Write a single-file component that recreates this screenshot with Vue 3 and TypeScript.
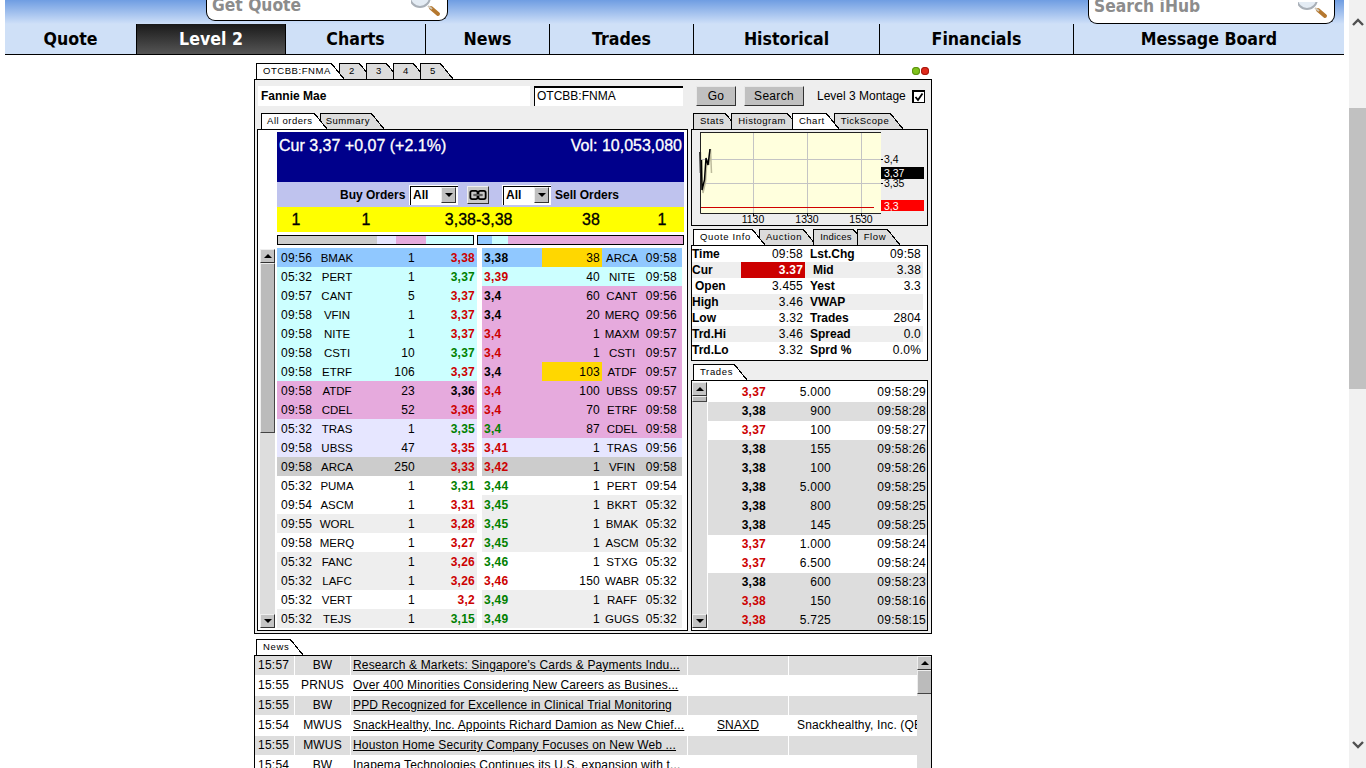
<script setup lang="ts">
type Tone = 'blue' | 'cyan' | 'pink' | 'lav' | 'gray' | 'white' | 'soft'
type Dir = 'up' | 'down' | 'flat'
interface Order { time: string; sym: string; size: string; price: string; dir: Dir; tone: Tone; gold?: boolean }

const navItems = ['Quote', 'Level 2', 'Charts', 'News', 'Trades', 'Historical', 'Financials', 'Message Board']
const navWidths = [132, 149, 140, 124, 144, 186, 194, 270]

const buys: Order[] = [
  { time: '09:56', sym: 'BMAK', size: '1', price: '3,38', dir: 'down', tone: 'blue' },
  { time: '05:32', sym: 'PERT', size: '1', price: '3,37', dir: 'up', tone: 'cyan' },
  { time: '09:57', sym: 'CANT', size: '5', price: '3,37', dir: 'down', tone: 'cyan' },
  { time: '09:58', sym: 'VFIN', size: '1', price: '3,37', dir: 'down', tone: 'cyan' },
  { time: '09:58', sym: 'NITE', size: '1', price: '3,37', dir: 'down', tone: 'cyan' },
  { time: '09:58', sym: 'CSTI', size: '10', price: '3,37', dir: 'up', tone: 'cyan' },
  { time: '09:58', sym: 'ETRF', size: '106', price: '3,37', dir: 'down', tone: 'cyan' },
  { time: '09:58', sym: 'ATDF', size: '23', price: '3,36', dir: 'flat', tone: 'pink' },
  { time: '09:58', sym: 'CDEL', size: '52', price: '3,36', dir: 'down', tone: 'pink' },
  { time: '05:32', sym: 'TRAS', size: '1', price: '3,35', dir: 'up', tone: 'lav' },
  { time: '09:58', sym: 'UBSS', size: '47', price: '3,35', dir: 'down', tone: 'lav' },
  { time: '09:58', sym: 'ARCA', size: '250', price: '3,33', dir: 'down', tone: 'gray' },
  { time: '05:32', sym: 'PUMA', size: '1', price: '3,31', dir: 'up', tone: 'white' },
  { time: '09:54', sym: 'ASCM', size: '1', price: '3,31', dir: 'down', tone: 'white' },
  { time: '09:55', sym: 'WORL', size: '1', price: '3,28', dir: 'down', tone: 'soft' },
  { time: '09:58', sym: 'MERQ', size: '1', price: '3,27', dir: 'down', tone: 'white' },
  { time: '05:32', sym: 'FANC', size: '1', price: '3,26', dir: 'down', tone: 'soft' },
  { time: '05:32', sym: 'LAFC', size: '1', price: '3,26', dir: 'down', tone: 'soft' },
  { time: '05:32', sym: 'VERT', size: '1', price: '3,2', dir: 'down', tone: 'white' },
  { time: '05:32', sym: 'TEJS', size: '1', price: '3,15', dir: 'up', tone: 'soft' }
]

const sells: Order[] = [
  { time: '09:58', sym: 'ARCA', size: '38', price: '3,38', dir: 'flat', tone: 'blue', gold: true },
  { time: '09:58', sym: 'NITE', size: '40', price: '3,39', dir: 'down', tone: 'cyan' },
  { time: '09:56', sym: 'CANT', size: '60', price: '3,4', dir: 'flat', tone: 'pink' },
  { time: '09:56', sym: 'MERQ', size: '20', price: '3,4', dir: 'flat', tone: 'pink' },
  { time: '09:57', sym: 'MAXM', size: '1', price: '3,4', dir: 'down', tone: 'pink' },
  { time: '09:57', sym: 'CSTI', size: '1', price: '3,4', dir: 'down', tone: 'pink' },
  { time: '09:57', sym: 'ATDF', size: '103', price: '3,4', dir: 'flat', tone: 'pink', gold: true },
  { time: '09:57', sym: 'UBSS', size: '100', price: '3,4', dir: 'down', tone: 'pink' },
  { time: '09:58', sym: 'ETRF', size: '70', price: '3,4', dir: 'down', tone: 'pink' },
  { time: '09:58', sym: 'CDEL', size: '87', price: '3,4', dir: 'up', tone: 'pink' },
  { time: '09:56', sym: 'TRAS', size: '1', price: '3,41', dir: 'down', tone: 'lav' },
  { time: '09:58', sym: 'VFIN', size: '1', price: '3,42', dir: 'down', tone: 'gray' },
  { time: '09:54', sym: 'PERT', size: '1', price: '3,44', dir: 'up', tone: 'white' },
  { time: '05:32', sym: 'BKRT', size: '1', price: '3,45', dir: 'up', tone: 'soft' },
  { time: '05:32', sym: 'BMAK', size: '1', price: '3,45', dir: 'up', tone: 'soft' },
  { time: '05:32', sym: 'ASCM', size: '1', price: '3,45', dir: 'up', tone: 'soft' },
  { time: '05:32', sym: 'STXG', size: '1', price: '3,46', dir: 'up', tone: 'white' },
  { time: '05:32', sym: 'WABR', size: '150', price: '3,46', dir: 'down', tone: 'white' },
  { time: '05:32', sym: 'RAFF', size: '1', price: '3,49', dir: 'up', tone: 'soft' },
  { time: '05:32', sym: 'GUGS', size: '1', price: '3,49', dir: 'up', tone: 'soft' }
]

const depthLeft = [
  { tone: 'gray', width: 99 }, { tone: 'lav', width: 19 }, { tone: 'pink', width: 30 }, { tone: 'cyan', width: 47 }
]
const depthRight = [
  { tone: 'blue', width: 14 }, { tone: 'cyan', width: 16 }, { tone: 'pink', width: 175 }
]

const quotes = [
  ['Time', '09:58', 'Lst.Chg', '09:58'],
  ['Cur', '3.37', 'Mid', '3.38'],
  ['Open', '3.455', 'Yest', '3.3'],
  ['High', '3.46', 'VWAP', ''],
  ['Low', '3.32', 'Trades', '2804'],
  ['Trd.Hi', '3.46', 'Spread', '0.0'],
  ['Trd.Lo', '3.32', 'Sprd %', '0.0%']
]

const trades: { price: string; qty: string; time: string; red: boolean; shade: boolean }[] = [
  { price: '3,37', qty: '5.000', time: '09:58:29', red: true, shade: false },
  { price: '3,38', qty: '900', time: '09:58:28', red: false, shade: true },
  { price: '3,37', qty: '100', time: '09:58:27', red: true, shade: false },
  { price: '3,38', qty: '155', time: '09:58:26', red: false, shade: true },
  { price: '3,38', qty: '100', time: '09:58:26', red: false, shade: true },
  { price: '3,38', qty: '5.000', time: '09:58:25', red: false, shade: true },
  { price: '3,38', qty: '800', time: '09:58:25', red: false, shade: true },
  { price: '3,38', qty: '145', time: '09:58:25', red: false, shade: true },
  { price: '3,37', qty: '1.000', time: '09:58:24', red: true, shade: false },
  { price: '3,37', qty: '6.500', time: '09:58:24', red: true, shade: false },
  { price: '3,38', qty: '600', time: '09:58:23', red: false, shade: true },
  { price: '3,38', qty: '150', time: '09:58:16', red: true, shade: true },
  { price: '3,38', qty: '5.725', time: '09:58:15', red: true, shade: true }
]

const news = [
  ['15:57', 'BW', "Research & Markets: Singapore's Cards & Payments Indu...", '', ''],
  ['15:55', 'PRNUS', 'Over 400 Minorities Considering New Careers as Busines...', '', ''],
  ['15:55', 'BW', 'PPD Recognized for Excellence in Clinical Trial Monitoring', '', ''],
  ['15:54', 'MWUS', 'SnackHealthy, Inc. Appoints Richard Damion as New Chief...', 'SNAXD', 'Snackhealthy, Inc. (QB)'],
  ['15:55', 'MWUS', 'Houston Home Security Company Focuses on New Web ...', '', ''],
  ['15:54', 'BW', 'Inapema Technologies Continues its U.S. expansion with t...', '', '']
]
</script>

<template>
  <div class="page">
    <div class="main">
      <header class="hero">
        <div class="search search-quote">
          <span>Get Quote</span>
          <svg class="lens" viewBox="0 0 32 20" width="32" height="20" aria-hidden="true">
            <circle cx="9" cy="-3" r="10" fill="#e4ecf4" stroke="#a9b0b8" stroke-width="2" />
            <path d="M20 8 L27 14" stroke="#b5782f" stroke-width="4" stroke-linecap="round" />
            <path d="M17 6 L21 9" stroke="#cfc6b6" stroke-width="2" />
          </svg>
        </div>
        <div class="search search-hub">
          <span>Search iHub</span>
          <svg class="lens" viewBox="0 0 32 20" width="32" height="20" aria-hidden="true">
            <circle cx="9" cy="-3" r="10" fill="#e4ecf4" stroke="#a9b0b8" stroke-width="2" />
            <path d="M20 8 L27 14" stroke="#b5782f" stroke-width="4" stroke-linecap="round" />
            <path d="M17 6 L21 9" stroke="#cfc6b6" stroke-width="2" />
          </svg>
        </div>
      </header>
      <nav class="nav">
        <a
          v-for="(item, i) in navItems"
          :key="item"
          class="nav-item"
          :class="{ active: item === 'Level 2' }"
          :style="{ width: navWidths[i] + 'px' }"
        >{{ item }}</a>
      </nav>

      <section class="widget">
        <div class="widget-top">
          <div class="tabs top-tabs">
            <span class="tab active first">OTCBB:FNMA</span>
            <span v-for="n in ['2', '3', '4', '5']" :key="n" class="tab num">{{ n }}</span>
          </div>
          <div class="dots">
            <i class="dot green"></i>
            <i class="dot red"></i>
          </div>
        </div>

        <div class="panel">
          <div class="toolbar">
            <div class="name">Fannie Mae</div>
            <div class="symbol-input">OTCBB:FNMA</div>
            <button class="btn go">Go</button>
            <button class="btn find">Search</button>
            <span class="montage">Level 3 Montage</span>
            <span class="check">
              <svg viewBox="0 0 10 10" width="10" height="10" aria-hidden="true">
                <path d="M1.5 5 L4 8 L8.5 1.5" fill="none" stroke="#000" stroke-width="1.8" />
              </svg>
            </span>
          </div>

          <div class="columns">
            <div class="col-left">
              <div class="tabs tabs-left">
                <span class="tab active">All orders</span>
                <span class="tab">Summary</span>
              </div>
              <div class="book-box">
                <div class="banner">
                  <span>Cur 3,37 +0,07 (+2.1%)</span>
                  <span>Vol: 10,053,080</span>
                </div>
                <div class="filters">
                  <b class="buy-label">Buy Orders</b>
                  <span class="select"><b>All</b><i class="select-btn"><i class="tri"></i></i></span>
                  <span class="link-btn">
                    <svg viewBox="0 0 20 12" width="18" height="12" aria-hidden="true">
                      <rect x="1.5" y="1.5" width="8" height="9" rx="2" fill="none" stroke="#000" stroke-width="2" />
                      <rect x="10.5" y="1.5" width="8" height="9" rx="2" fill="none" stroke="#000" stroke-width="2" />
                      <path d="M5 6 H15" stroke="#000" stroke-width="2.4" />
                      <path d="M5 6 H15" stroke="#fff" stroke-width=".8" />
                    </svg>
                  </span>
                  <span class="select"><b>All</b><i class="select-btn"><i class="tri"></i></i></span>
                  <b class="sell-label">Sell Orders</b>
                </div>
                <div class="best">
                  <span class="b1">1</span>
                  <span class="b2">1</span>
                  <span class="b3">3,38</span>
                  <span class="b4">-3,38</span>
                  <span class="b5">38</span>
                  <span class="b6">1</span>
                </div>
                <div class="depth">
                  <div class="depth-bar left">
                    <i v-for="(d, i) in depthLeft" :key="i" :class="d.tone" :style="{ width: d.width + 'px' }"></i>
                  </div>
                  <div class="depth-bar right">
                    <i v-for="(d, i) in depthRight" :key="i" :class="d.tone" :style="{ width: d.width + 'px' }"></i>
                  </div>
                </div>
                <div class="orders">
                  <div class="scroll book-scroll">
                    <span class="arrow"><i class="tri up"></i></span>
                    <span class="thumb book-thumb"></span>
                    <span class="track"></span>
                    <span class="arrow"><i class="tri"></i></span>
                  </div>
                  <div class="book buy">
                    <div v-for="o in buys" :key="o.time + o.sym" class="row" :class="o.tone">
                      <span class="c-time">{{ o.time }}</span>
                      <span class="c-sym">{{ o.sym }}</span>
                      <span class="c-size">{{ o.size }}</span>
                      <b class="c-price" :class="o.dir">{{ o.price }}</b>
                    </div>
                  </div>
                  <div class="book sell">
                    <div v-for="o in sells" :key="o.time + o.sym" class="row" :class="o.tone">
                      <b class="c-price" :class="o.dir">{{ o.price }}</b>
                      <span class="c-size" :class="{ gold: o.gold }">{{ o.size }}</span>
                      <span class="c-sym">{{ o.sym }}</span>
                      <span class="c-time">{{ o.time }}</span>
                    </div>
                  </div>
                </div>
              </div>
            </div>

            <div class="col-right">
              <div class="tabs tabs-right stats-tabs">
                <span class="tab">Stats</span>
                <span class="tab">Histogram</span>
                <span class="tab active">Chart</span>
                <span class="tab">TickScope</span>
              </div>
              <div class="box chart-box">
                <svg class="chart" viewBox="0 0 236 95" width="236" height="95">
                  <rect x="8" y="3" width="181" height="80" fill="#ffffdd" />
                  <g stroke="#c4c4c4" stroke-width="1">
                    <path d="M61.5 3 V83 M115.5 3 V83 M169.5 3 V83 M8 29.5 H189 M8 53.5 H189" />
                  </g>
                  <path d="M8 77.5 H182" stroke="#d00000" stroke-width="1" />
                  <polyline points="8.5,22 9,43 11,63 13.5,52 15,30 17,35 18.5,19 19.5,43" fill="none" stroke="#bdbb9c" stroke-width="1.5" />
                  <polyline points="8,22 8.5,43 9.5,30 10,60 12.5,50 14,28 16,35 18,19" fill="none" stroke="#000" stroke-width="1.5" />
                  <path d="M8.5 3 V83.5 H189 M8 2.5 H189" fill="none" stroke="#222" stroke-width="1" />
                  <g stroke="#000" stroke-width="1">
                    <path d="M61.5 83 V86 M115.5 83 V86 M169.5 83 V86 M189 29.5 H191 M189 53.5 H191 M189 77.5 H191" />
                  </g>
                  <rect x="189" y="37" width="43" height="12" fill="#000" />
                  <rect x="189" y="70" width="43" height="11" fill="#ff0000" />
                  <g class="chart-text">
                    <text x="192" y="33">3,4</text>
                    <text x="192" y="57">3,35</text>
                    <text x="192" y="47" fill="#fff">3,37</text>
                    <text x="192" y="80" fill="#fff">3,3</text>
                    <text x="61" y="93" text-anchor="middle">1130</text>
                    <text x="115" y="93" text-anchor="middle">1330</text>
                    <text x="169" y="93" text-anchor="middle">1530</text>
                  </g>
                </svg>
              </div>

              <div class="tabs tabs-right quote-tabs gap3">
                <span class="tab active">Quote Info</span>
                <span class="tab">Auction</span>
                <span class="tab">Indices</span>
                <span class="tab">Flow</span>
              </div>
              <div class="box quote-box">
                <div v-for="(q, i) in quotes" :key="q[0]" class="q-row" :class="{ alt: i % 2 === 1 }">
                  <b class="q-label" :class="{ indent: q[0] === 'Open' }">{{ q[0] }}</b>
                  <span class="q-val" :class="{ cur: q[0] === 'Cur' }">{{ q[1] }}</span>
                  <b class="q-label two" :class="{ indent: q[2] === 'Mid' }">{{ q[2] }}</b>
                  <span class="q-val two">{{ q[3] }}</span>
                </div>
              </div>

              <div class="tabs tabs-right gap3">
                <span class="tab active">Trades</span>
              </div>
              <div class="box trades-box">
                <div class="scroll trades-scroll">
                  <span class="arrow"><i class="tri up"></i></span>
                  <span class="thumb trades-thumb"></span>
                  <span class="track"></span>
                  <span class="arrow"><i class="tri"></i></span>
                </div>
                <div class="trades">
                  <div v-for="(t, i) in trades" :key="i" class="t-row" :class="{ shade: t.shade }">
                    <b class="t-price" :class="{ down: t.red }">{{ t.price }}</b>
                    <span class="t-qty">{{ t.qty }}</span>
                    <span class="t-time">{{ t.time }}</span>
                  </div>
                </div>
              </div>
            </div>
          </div>
        </div>

        <div class="tabs news-tabs">
          <span class="tab active">News</span>
        </div>
        <div class="news">
          <div class="news-list">
            <div v-for="(n, i) in news" :key="i" class="n-row" :class="{ shade: i % 2 === 0 }">
              <span class="n-time">{{ n[0] }}</span>
              <span class="n-src">{{ n[1] }}</span>
              <span class="n-head">{{ n[2] }}</span>
              <span class="n-sym">{{ n[3] }}</span>
              <span class="n-name">{{ n[4] }}</span>
            </div>
          </div>
          <div class="scroll news-scroll">
            <span class="arrow"><i class="tri up"></i></span>
            <span class="thumb news-thumb"></span>
            <span class="track"></span>
          </div>
        </div>
      </section>
    </div>

    <aside class="page-scroll">
      <svg class="chev" viewBox="0 0 14 10" width="14" height="10" aria-hidden="true">
        <path d="M2 8 L7 3 L12 8" fill="none" stroke="#505050" stroke-width="2.4" />
      </svg>
      <span class="page-thumb"></span>
      <svg class="chev bottom" viewBox="0 0 14 10" width="14" height="10" aria-hidden="true">
        <path d="M2 2 L7 7 L12 2" fill="none" stroke="#505050" stroke-width="2.4" />
      </svg>
    </aside>
  </div>
</template>

<style>
html, body { margin: 0; background: #fff; overflow: hidden; }
</style>

<style scoped>
.page {
  width: 1366px;
  height: 768px;
  overflow: hidden;
  display: flex;
  font: 12px "Liberation Sans", Arial, sans-serif;
  color: #000;
  background: #fff;
}
.main { width: 1349px; flex: none; }

.hero {
  height: 24px;
  margin: 0 5px;
  display: flex;
  align-items: flex-start;
  background: linear-gradient(#6f9de2, #cfe0f8);
}
.search {
  box-sizing: border-box;
  display: flex;
  justify-content: space-between;
  background: #fff;
  border: 1px solid #000;
  border-top: 0;
  border-radius: 0 0 9px 9px;
  overflow: hidden;
  font: bold 17.3px "DejaVu Sans Condensed", "DejaVu Sans", sans-serif;
  color: #8c8c8c;
  padding-left: 5px;
}
.search span { line-height: 10px; white-space: nowrap; }
.search-quote { width: 242px; height: 21px; margin-left: 201px; }
.search-hub { width: 247px; height: 24px; margin-left: 640px; }
.search-hub span { line-height: 13px; }
.lens { flex: none; margin-right: 4px; }
.search-hub .lens { margin-top: 2px; }

.nav {
  height: 30px;
  margin: 0 5px;
  display: flex;
  background: #cfe0f7;
  border-bottom: 1px solid #000;
  box-sizing: content-box;
}
.nav-item {
  box-sizing: border-box;
  border-right: 1px solid #000;
  display: flex;
  align-items: center;
  justify-content: center;
  font: bold 17.6px "DejaVu Sans Condensed", "DejaVu Sans", sans-serif;
  color: #000;
}
.nav-item:last-child { border-right: 0; }
.nav-item.active {
  color: #fff;
  background: linear-gradient(#1a1a1a, #555);
}

.widget { width: 678px; margin-left: 254px; }
.widget-top {
  height: 24px;
  display: flex;
  align-items: flex-end;
  justify-content: space-between;
  padding-left: 2px;
}

.tabs { display: flex; height: 16px; }
.tab {
  position: relative;
  box-sizing: border-box;
  height: 16px;
  line-height: 14px;
  background: #dcdcdc;
  border-top: 1px solid #000;
  border-left: 1px solid #000;
  padding: 0 1px 0 6px;
  margin-right: 8px;
  font-size: 9.5px;
  letter-spacing: .65px;
  white-space: nowrap;
}
.tab::after {
  content: "";
  position: absolute;
  left: 100%;
  top: -1px;
  width: 13px;
  height: 16px;
  background: linear-gradient(to top right, #dcdcdc 0 calc(50% - .6px), #000 calc(50% - .6px) calc(50% + .6px), transparent calc(50% + .6px));
}
.tab.active { background: #fff; z-index: 2; }
.tab.active::after {
  background: linear-gradient(to top right, #fff 0 calc(50% - .6px), #000 calc(50% - .6px) calc(50% + .6px), transparent calc(50% + .6px));
}
.tab.num { width: 20px; padding-left: 9px; margin-right: 7px; }
.top-tabs .first { width: 75px; letter-spacing: .55px; }
.dots { display: flex; gap: 1px; margin-right: 3px; margin-bottom: 4px; }
.dot { width: 8px; height: 8px; border-radius: 50%; border: 0; }
.dot.green { background: #7fc31c; box-shadow: inset 0 0 0 1px #5d8f10; }
.dot.red { background: #e02a1c; box-shadow: inset 0 0 0 1px #a51a10; }

.panel {
  box-sizing: border-box;
  height: 555px;
  border: 1px solid #000;
  background: #eee;
}
.toolbar {
  display: flex;
  align-items: center;
  height: 20px;
  margin: 6px 0 0 3px;
}
.name {
  width: 269px;
  height: 20px;
  line-height: 20px;
  padding-left: 3px;
  background: #fff;
  font-weight: bold;
}
.symbol-input {
  box-sizing: border-box;
  width: 149px;
  height: 20px;
  line-height: 16px;
  margin-left: 4px;
  padding-left: 2px;
  background: #fff;
  border-top: 2px solid #000;
  border-left: 1px solid #000;
}
.btn {
  box-sizing: border-box;
  height: 20px;
  padding: 0;
  background: #c0c0c0;
  border: 1px solid;
  border-color: #e8e8e8 #333 #333 #e8e8e8;
  font: 12px "Liberation Sans", Arial, sans-serif;
  letter-spacing: .3px;
  color: #000;
}
.go { width: 40px; margin-left: 13px; }
.find { width: 60px; margin-left: 8px; }
.montage { margin-left: 13px; width: 95px; }
.check {
  box-sizing: border-box;
  width: 13px;
  height: 13px;
  background: #fff;
  border: 1px solid #000;
  border-width: 2px 1px 1px 2px;
  display: flex;
}

.columns { display: flex; margin-top: 7px; }
.col-left { width: 431px; margin-left: 2px; }
.col-right { width: 237px; margin-left: 3px; }
.tabs-left { padding-left: 4px; }
.tabs-left .tab { padding-left: 5px; margin-right: 6px; letter-spacing: .55px; }
.tabs-left .tab.active { margin-right: 6px; }
.tabs-right { padding-left: 2px; }
.tabs-right .tab { margin-right: 7px; padding-left: 6px; }
.stats-tabs .tab { letter-spacing: .5px; }
.stats-tabs .tab:nth-child(1) { margin-right: 6px; }
.stats-tabs .tab:nth-child(2) { margin-right: 5px; }
.stats-tabs .tab:nth-child(3) { margin-right: 8px; }
.quote-tabs .tab:nth-child(2) { margin-right: 10px; }
.quote-tabs .tab:nth-child(3) { margin-right: 4px; letter-spacing: .2px; }

.book-box {
  box-sizing: border-box;
  height: 502px;
  background: #fff;
  border: 1px solid #000;
  padding-top: 2px;
}
.banner {
  box-sizing: border-box;
  height: 50px;
  margin-left: 19px;
  width: 407px;
  padding: 4px 2px 0;
  display: flex;
  justify-content: space-between;
  background: #00008b;
  color: #fff;
  font-size: 16px;
  line-height: 20px;
  -webkit-text-stroke: .3px #fff;
}
.filters {
  height: 25px;
  width: 407px;
  margin-left: 19px;
  background: #bfc3ee;
  display: flex;
  align-items: center;
}
.buy-label { margin-left: 63px; width: 69px; }
.sell-label { margin-left: 4px; }
.select {
  box-sizing: border-box;
  width: 49px;
  height: 20px;
  padding: 2px;
  background: #fff;
  box-shadow: inset 1px 1px 0 #fff, inset 2px 2px 0 #000;
  display: flex;
  align-items: center;
  justify-content: space-between;
}
.select b { padding-left: 2px; }
.select-btn {
  width: 15px;
  height: 16px;
  box-sizing: border-box;
  background: #c0c0c0;
  border: 1px solid;
  border-color: #eee #333 #333 #eee;
  display: flex;
  align-items: center;
  justify-content: center;
}
.tri {
  width: 0;
  height: 0;
  border-left: 4px solid transparent;
  border-right: 4px solid transparent;
  border-top: 4px solid #000;
}
.tri.up { border-top: 0; border-bottom: 4px solid #000; }
.link-btn {
  box-sizing: border-box;
  width: 22px;
  height: 18px;
  margin: 0 13px 0 9px;
  background: #c8c8c8;
  border: 1px solid;
  border-color: #eee #333 #333 #eee;
  display: flex;
  align-items: center;
  justify-content: center;
}
.best {
  height: 25px;
  width: 407px;
  margin-left: 19px;
  background: #ff0;
  display: grid;
  grid-template-columns: 38px 102px 59px 64px 102px 40px;
  align-items: center;
  font-size: 16px;
  font-weight: normal;
  -webkit-text-stroke: .3px #000;
}
.best .b1, .best .b2, .best .b5, .best .b6 { text-align: center; }
.best .b3 { text-align: right; }
.depth {
  display: flex;
  margin: 3px 0 0 19px;
  height: 10px;
  gap: 3px;
}
.depth-bar {
  box-sizing: border-box;
  display: flex;
  height: 10px;
  border: 1px solid #000;
}
.depth-bar.left { width: 197px; }
.depth-bar.right { width: 207px; }
.depth-bar i { display: block; height: 8px; }
.gray { background: #ccc; }
.lav { background: #e6e6ff; }
.pink { background: #e6aadd; }
.cyan { background: #ccffff; }
.blue { background: #90c8ff; }
.white { background: #fff; }
.soft { background: #eee; }

.orders { display: flex; margin-top: 3px; }
.scroll {
  display: flex;
  flex-direction: column;
  width: 15px;
  flex: none;
  background: #ddd;
}
.arrow {
  box-sizing: border-box;
  width: 15px;
  height: 14px;
  flex: none;
  background: #c4c4c4;
  border: 1px solid;
  border-color: #eee #333 #333 #eee;
  display: flex;
  align-items: center;
  justify-content: center;
}
.thumb {
  box-sizing: border-box;
  flex: none;
  width: 15px;
  background: #bbb;
  border: 1px solid;
  border-color: #eee #444 #444 #eee;
}
.track { flex: 1; }
.book-scroll { margin: 1px 2px 2px 2px; height: 379px; }
.book-thumb { height: 170px; }
.book { width: 200px; }
.book.sell { margin-left: 5px; }
.row {
  display: grid;
  height: 19px;
  align-items: start;
  letter-spacing: .25px;
}
.buy .row { grid-template-columns: 40px 40px 60px 60px; }
.sell .row { grid-template-columns: 60px 60px 40px 40px; }
.row > * {
  height: 19px;
  line-height: 21px;
  box-sizing: border-box;
  white-space: nowrap;
}
.buy .c-time { padding-left: 4px; }
.sell .c-time { text-align: right; padding-right: 5px; }
.c-sym { text-align: center; font-size: 11.5px; letter-spacing: 0; }
.c-size { text-align: right; padding-right: 2px; }
.buy .c-price { text-align: right; padding-right: 2px; }
.sell .c-price { padding-left: 2px; }
.c-size.gold { background: #ffd700; }
b.up { color: #008000; }
b.down { color: #cc0000; }
b.flat { color: #000; }

.box {
  box-sizing: border-box;
  border: 1px solid #000;
  background: #fff;
}
.chart-box { height: 97px; background: #eee; }
.chart { display: block; }
.chart-text text { font: 10.5px "Liberation Sans", Arial, sans-serif; }
.gap3 { margin-top: 3px; }
.quote-box { height: 116px; }
.q-row {
  display: grid;
  grid-template-columns: 49px 64px 55px 63px;
  width: 231px;
  height: 16px;
  line-height: 16px;
  letter-spacing: .2px;
}
.q-row.alt { background: #eee; }
.q-label { font-size: 12px; letter-spacing: 0; }
.q-label.two { padding-left: 5px; }
.q-label.indent { padding-left: 3px; }
.q-label.two.indent { padding-left: 8px; }
.q-val { text-align: right; padding-right: 2px; }
.q-val.cur { background: #cc0000; color: #fff; font-weight: bold; }
.q-val.two { padding-right: 2px; }

.trades-box { height: 251px; display: flex; padding-top: 2px; overflow: hidden; }
.trades-scroll { height: 246px; margin-top: -1px; margin-right: 1px; }
.trades-thumb { height: 6px; }
.trades { flex: 1; }
.t-row {
  display: grid;
  grid-template-columns: 58px 65px 95px;
  height: 19px;
  line-height: 19px;
  letter-spacing: .25px;
}
.t-row.shade { background: #ddd; }
.t-price, .t-qty, .t-time { text-align: right; }
.t-price.down { color: #cc0000; }

.news-tabs { padding-left: 2px; margin-top: 5px; }
.news {
  display: flex;
  height: 113px;
  box-sizing: border-box;
  border: 1px solid #000;
  border-bottom: 0;
  overflow: hidden;
}
.news-list { width: 662px; flex: none; }
.n-row {
  display: grid;
  grid-template-columns: 39px 55px 336px 100px 129px;
  column-gap: 1px;
  height: 20px;
  overflow: hidden;
  letter-spacing: .15px;
}
.n-row > * {
  height: 19px;
  line-height: 19px;
  white-space: nowrap;
  overflow: hidden;
}
.n-row.shade > * { background: #ddd; }
.n-time { padding-left: 3px; letter-spacing: .25px; }
.n-src { text-align: center; }
.n-head { text-decoration: underline; padding-left: 2px; }
.n-sym { text-decoration: underline; text-align: center; }
.n-name { padding-left: 8px; }
.news-scroll { height: 112px; }
.news-thumb { height: 24px; }

.page-scroll {
  width: 17px;
  flex: none;
  height: 768px;
  background: #f1f1f1;
  display: flex;
  flex-direction: column;
  align-items: center;
}
.chev { display: block; margin-top: 17px; flex: none; }
.page-thumb {
  display: block;
  width: 17px;
  height: 281px;
  margin-top: 81px;
  background: #c1c1c1;
  flex: none;
}
.chev.bottom { margin-top: 351px; }
</style>
